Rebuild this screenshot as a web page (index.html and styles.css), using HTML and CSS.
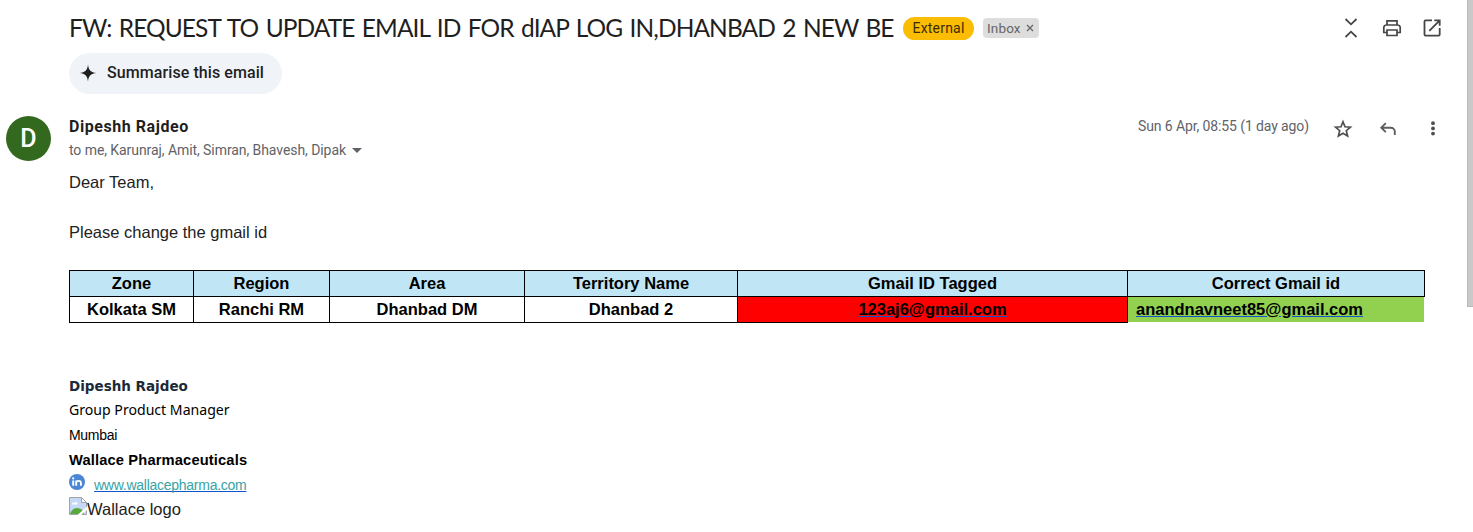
FILE: index.html
```html
<!DOCTYPE html>
<html lang="en">
<head>
<meta charset="utf-8">
<title>FW: REQUEST TO UPDATE EMAIL ID</title>
<link rel="stylesheet" href="styles.css">
</head>
<body>
<main class="mail">
  <header class="subject-row">
    <h1 class="subject">FW: REQUEST TO UPDATE EMAIL ID FOR dIAP LOG IN,DHANBAD 2 NEW BE</h1>
    <span class="tag-external"><span class="external-text">External</span></span>
    <span class="tag-inbox"><span class="inbox-text">Inbox</span>
      <svg width="8" height="8" viewBox="0 0 8 8"><path d="M1 1l6 6M7 1L1 7" stroke="#666" stroke-width="1.3"/></svg>
    </span>
    <div class="tools">
      <svg width="24" height="24" viewBox="0 0 24 24"><path d="M6.500 3l5.500 5.300L17.500 3M6.500 21l5.500-5.300L17.500 21" fill="none" stroke="#444746" stroke-width="1.8"/></svg>
      <svg width="24" height="24" viewBox="0 0 24 24" fill="none" stroke="#444746" stroke-width="1.7"><path d="M7 8.500V4.800h10v3.700M7 16.500H3.800V11.500a2.500 2.500 0 0 1 2.500-2.500h11.400a2.500 2.500 0 0 1 2.500 2.500v5H17"/><path d="M7 14h10v5.500H7z"/></svg>
      <svg width="24" height="24" viewBox="0 0 24 24" fill="none" stroke="#444746" stroke-width="1.8"><path d="M12 4.400H5.500a1 1 0 0 0-1 1v13.200a1 1 0 0 0 1 1h13.200a1 1 0 0 0 1-1V12M14.300 4.400h5.400v5.400M19.500 4.600L9.300 14.800"/></svg>
    </div>
  </header>

  <div class="summary-row">
    <button class="summarise">
      <svg width="18" height="18" viewBox="0 0 18 18"><path d="M9 .5C9.600 6.200 11.800 8.400 17.500 9 11.800 9.600 9.600 11.800 9 17.500 8.400 11.800 6.200 9.600.5 9 6.200 8.400 8.400 6.200 9 .5z" fill="#1f1f1f"/></svg>
      <span class="summarise-text">Summarise this email</span>
    </button>
  </div>

  <section class="sender-row">
    <div class="avatar">D</div>
    <div class="sender">
      <div class="name">Dipeshh Rajdeo</div>
      <div class="to"><span class="to-text">to me, Karunraj, Amit, Simran, Bhavesh, Dipak</span>
        <svg width="10" height="5" viewBox="0 0 10 5"><path d="M0 0h10L5 5z" fill="#5f6368"/></svg>
      </div>
    </div>
    <div class="date">Sun 6 Apr, 08:55 (1 day ago)</div>
    <div class="actions">
      <svg width="20" height="20" viewBox="0 0 20 20"><path d="M10 2.800l2 5 5.400.400-4.100 3.500 1.300 5.300L10 14.200 5.400 17l1.300-5.300-4.100-3.500 5.400-.4z" fill="none" stroke="#4c4f50" stroke-width="1.700"/></svg>
      <svg width="20" height="20" viewBox="0 0 20 20"><path d="M7.800 4.200L3.300 8.700l4.500 4.500M3.500 8.700h9.300a4 4 0 0 1 4 4v3.300" fill="none" stroke="#5b5e5f" stroke-width="1.900"/></svg>
      <svg width="20" height="20" viewBox="0 0 20 20" fill="#4c4f50"><circle cx="10" cy="4.200" r="1.900"/><circle cx="10" cy="9.400" r="1.900"/><circle cx="10" cy="14.600" r="1.900"/></svg>
    </div>
  </section>

  <article class="message">
    <p class="line">Dear Team,</p>
    <p class="line second">Please change the gmail id</p>
    <table class="ids">
      <colgroup><col class="c1"><col class="c2"><col class="c3"><col class="c4"><col class="c5"><col class="c6"></colgroup>
      <tr class="head"><th>Zone</th><th>Region</th><th>Area</th><th>Territory Name</th><th>Gmail ID Tagged</th><th>Correct Gmail id</th></tr>
      <tr><td>Kolkata SM</td><td>Ranchi RM</td><td>Dhanbad DM</td><td>Dhanbad 2</td><td class="wrong"><a>123aj6@gmail.com</a></td><td class="right"><a>anandnavneet85@gmail.com</a></td></tr>
    </table>
    <div class="signature">
      <div class="sig-name"><span>Dipeshh Rajdeo</span></div>
      <div class="sig-role"><span>Group Product Manager</span></div>
      <div class="sig-city"><span>Mumbai</span></div>
      <div class="sig-company"><span>Wallace Pharmaceuticals</span></div>
      <div class="sig-site">
        <svg class="linkedin" width="16" height="16" viewBox="0 0 16 16"><circle cx="8" cy="8" r="8" fill="#4a86d4"/><path d="M4.200 6.500v5.300M7.200 11.800V6.500M7.200 8.800c0-2.500 4.700-2.600 4.700 0v3" fill="none" stroke="#fff" stroke-width="1.900"/><circle cx="4.200" cy="4.400" r="1.100" fill="#fff"/></svg>
        <a class="site">www.wallacepharma.com</a>
      </div>
      <div class="sig-logo">
        <svg width="18" height="18" viewBox="0 0 18 18"><path d="M.5.500h12l5 5v12H.5z" fill="#c6d9f7" stroke="#a3a3a3"/><path d="M3 7.500c0-2 2-2.500 2.600-1.500C6.500 4 9 5 8.500 7.500z" fill="#fff"/><path d="M1 17c2-7 9-8 13-3l1 3z" fill="#58a83d"/><path d="M12.500.500v5h5z" fill="#fff" stroke="#a3a3a3"/><path d="M18.500 9v3.500L12 18H8.500z" fill="#fff"/></svg>
        <span>Wallace logo</span>
      </div>
    </div>
  </article>
</main>
<div class="scrollbar"></div>
</body>
</html>
```
FILE: styles.css
```css
* { box-sizing: border-box; }
body { margin: 0; height: 532px; display: flex; background: #fff; overflow: hidden; color: #1f1f1f; }
svg { display: block; flex: none; }
.mail { width: 1467px; flex: none; }
.scrollbar { width: 6px; height: 307px; background: #c9c9c9; border-left: 1px solid #b8b8b8; border-bottom: 1px solid #b8b8b8; }

.subject-row { height: 53px; padding: 3px 23px 0 69px; display: flex; align-items: center; }
.subject { margin: 0; width: 834px; flex: none; font: 400 24.5px/30px Lato, sans-serif; white-space: nowrap; letter-spacing: -0.92px; word-spacing: 2px; }
.tag-external { width: 71px; height: 23px; border-radius: 12px; background: #fbbc04; display: flex; justify-content: center; font: 14px/22px Roboto, sans-serif; letter-spacing: 0.2px; color: #3c2c00; }
.tag-inbox { margin-left: 9px; width: 56px; height: 20px; border-radius: 4px; background: #ddd; display: flex; align-items: center; gap: 5px; padding-left: 4px; font: 13.5px/20px Roboto, sans-serif; letter-spacing: 0.15px; color: #666; }
.tools { margin-left: auto; display: flex; gap: 16.5px; }

.summary-row { height: 63px; padding-left: 69px; }
.summarise { width: 213px; height: 41px; border: 0; border-radius: 20.5px; background: #f0f4f9; padding: 0 0 2px 10px; display: flex; align-items: center; gap: 10px; font: 500 16px/20px Roboto, sans-serif; letter-spacing: 0.08px; color: #1f1f1f; white-space: nowrap; }

.sender-row { height: 54px; padding: 0 24px 0 6px; display: flex; align-items: flex-start; }
.avatar { width: 45px; height: 45px; border-radius: 50%; background: #33691e; color: #fff; font: 500 25px/46px Roboto, sans-serif; text-align: center; }
.sender { margin-left: 18px; white-space: nowrap; }
.name { font: 700 16px/22px Roboto, sans-serif; letter-spacing: 0.55px; }
.to { display: flex; align-items: center; gap: 6px; font: 14px/24px Roboto, sans-serif; letter-spacing: -0.07px; color: #5f6368; }
.date { margin-left: auto; font: 14px/21px Roboto, sans-serif; letter-spacing: -0.11px; color: #5f6368; white-space: nowrap; }
.actions { margin: 3px 0 0 24px; display: flex; gap: 25px; }

.message { padding-left: 69px; font: 16.5px/25px "Liberation Sans", sans-serif; color: #222; }
.line { margin: 0; }
.second { margin: 25px 0; }
.ids { width: 1356px; table-layout: fixed; border-collapse: collapse; color: #000; }
.c1 { width: 124px; } .c2 { width: 136px; } .c3 { width: 195px; } .c4 { width: 213px; } .c5 { width: 390px; } .c6 { width: 297px; }
.ids th, .ids td { height: 26px; padding: 0; border: 1px solid #000; text-align: center; font: 700 16.5px/25px "Liberation Sans", sans-serif; }
.head { background: #c0e6f5; }
.ids a { text-decoration: underline; text-decoration-color: #1155cc; }
.wrong { background: #f00; }
.ids .right { background: #92d050; border-right-color: #fff; border-bottom-color: #fff; text-align: left; padding-left: 8px; }

.signature { margin-top: 50px; white-space: nowrap; color: #000; }
.signature > div { height: 25px; line-height: 25px; }
.sig-name { font: 700 13.5px "DejaVu Sans", sans-serif; color: #1b2a38; }
.signature > .sig-name { line-height: 27px; }
.sig-role { font: 14.1px "Noto Sans", sans-serif; }
.signature > .sig-role { line-height: 23px; }
.sig-city { font: 14px "Liberation Sans", sans-serif; letter-spacing: -0.3px; }
.sig-company { font: 700 14.7px "Liberation Sans", sans-serif; letter-spacing: 0.14px; }
.sig-site { display: flex; gap: 9px; font: 14px "Liberation Sans", sans-serif; letter-spacing: -0.26px; }
.linkedin { margin-top: 1px; }
.site { color: #38a3a5; text-decoration: underline; text-decoration-color: #1155cc; text-decoration-skip-ink: none; }
.sig-logo { display: flex; align-items: flex-start; color: #222; }
.signature > .sig-logo { line-height: 23px; }
.sig-logo svg { margin-top: -1px; }
```
